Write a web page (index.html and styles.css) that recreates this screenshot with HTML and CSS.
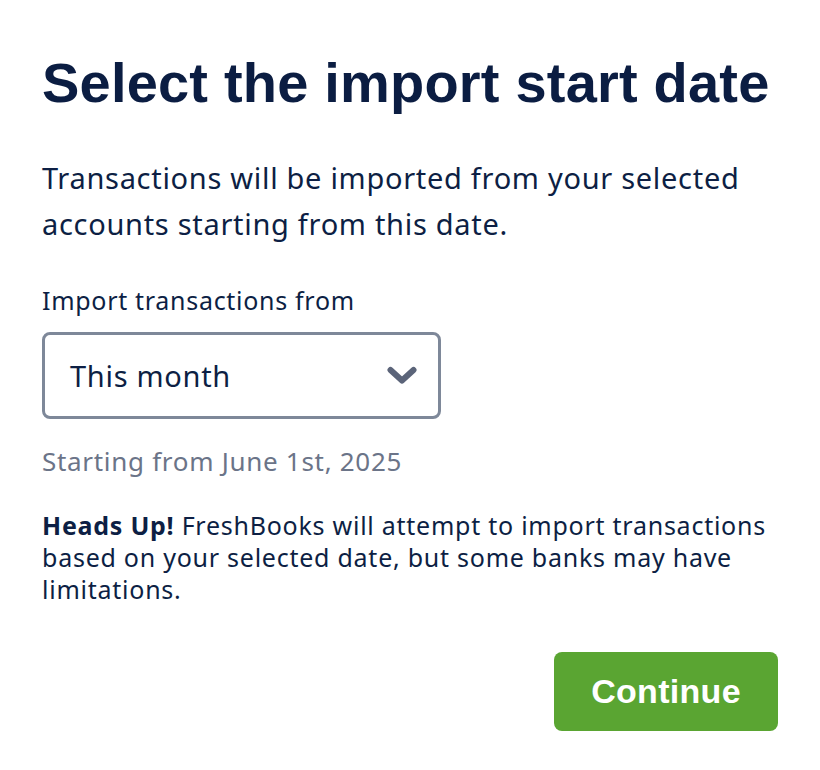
FILE: index.html
```html
<!DOCTYPE html>
<html lang="en">
<head>
<meta charset="utf-8">
<title>Select the import start date</title>
<link rel="stylesheet" href="styles.css">
</head>
<body>
<main class="page">
  <h1 class="title">Select the import start date</h1>
  <p class="intro">Transactions will be imported from your selected accounts starting from this date.</p>
  <div class="field">
    <label class="label" for="from">Import transactions from</label>
    <div class="select" id="from">
      <span class="select-value">This month</span>
      <svg class="chevron" width="32" height="20" viewBox="0 0 32 20" aria-hidden="true">
        <path d="M4.5 4 L16 14.5 L27.5 4" fill="none" stroke="#5b6479" stroke-width="6" stroke-linecap="round" stroke-linejoin="round"/>
      </svg>
    </div>
    <p class="hint">Starting from June 1st, 2025</p>
  </div>
  <p class="note"><strong>Heads Up!</strong> FreshBooks will attempt to import transactions based on your selected date, but some banks may have limitations.</p>
  <div class="actions">
    <button class="btn-primary" type="button">Continue</button>
  </div>
</main>
</body>
</html>
```
FILE: styles.css
```css
html, body {
  margin: 0;
  padding: 0;
  background: #ffffff;
}
.page {
  padding: 49px 42px 0 42px;
  color: #0d1f44;
  font-family: "Noto Sans", "DejaVu Sans", sans-serif;
}
.title {
  margin: 0;
  font-family: "Liberation Sans", Arial, sans-serif;
  font-weight: 700;
  font-size: 56px;
  line-height: 67px;
  letter-spacing: 0.2px;
  color: #0b1d42;
}
.intro {
  margin: 39px 0 0 0;
  font-size: 29px;
  line-height: 46px;
  letter-spacing: 0.7px;
}
.field {
  margin-top: 37px;
  display: flex;
  flex-direction: column;
}
.label {
  font-size: 25px;
  line-height: 32px;
  letter-spacing: 0.7px;
}
.select {
  margin-top: 16px;
  width: 399px;
  height: 87px;
  box-sizing: border-box;
  border: 3px solid #7e8899;
  border-radius: 8px;
  display: flex;
  align-items: center;
  justify-content: space-between;
  padding: 0 20px 0 25px;
}
.select-value {
  font-size: 29px;
  line-height: 36px;
  letter-spacing: 0.7px;
  color: #0d1f44;
}
.chevron {
  display: block;
}
.hint {
  margin: 26px 0 0 0;
  font-size: 26px;
  line-height: 32px;
  letter-spacing: 0.7px;
  color: #6b7488;
}
.note {
  margin: 32px 0 0 0;
  font-size: 25px;
  line-height: 32px;
  letter-spacing: 0.75px;
}
.note strong {
  font-weight: 700;
}
.actions {
  margin-top: 47px;
  display: flex;
  justify-content: flex-end;
}
.btn-primary {
  width: 224px;
  height: 79px;
  border: none;
  border-radius: 8px;
  background: #5aa532;
  color: #ffffff;
  font-family: "Liberation Sans", Arial, sans-serif;
  font-weight: 700;
  font-size: 34px;
  letter-spacing: 0.3px;
  cursor: pointer;
}
```
